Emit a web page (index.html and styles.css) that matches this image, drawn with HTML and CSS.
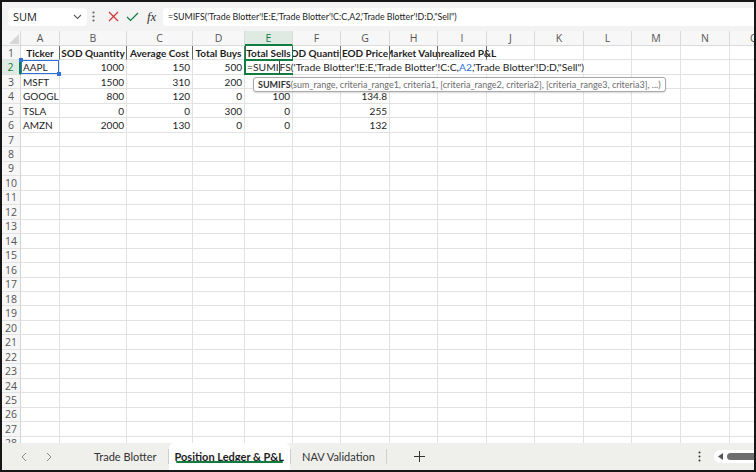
FILE: index.html
```html
<!DOCTYPE html>
<html lang="en">
<head>
    <meta charset="UTF-8">
    <title>Position Ledger &amp; P&amp;L</title>
    <link rel="stylesheet" href="styles.css">
</head>
<body>
<div class="window">
    <!-- Formula Bar -->
    <div class="formula-bar">
        <div class="name-box">
            <span>SUM</span>
            <svg width="9" height="6" viewBox="0 0 9 6"><path d="M1 1l3.5 3.5L8 1" stroke="#5f5f5f" fill="none" stroke-width="1.1"/></svg>
        </div>
        <svg class="bar-dots" width="3" height="11" viewBox="0 0 3 11"><circle cx="1.5" cy="1.5" r="1.1"/><circle cx="1.5" cy="5.5" r="1.1"/><circle cx="1.5" cy="9.5" r="1.1"/></svg>
        <svg class="btn-cancel" width="11" height="11" viewBox="0 0 11 11"><path d="M1 1l9 9M10 1l-9 9" stroke="#d13438" stroke-width="1.2"/></svg>
        <svg class="btn-enter" width="13" height="10" viewBox="0 0 13 10"><path d="M1 5l3.5 3.5L12 1" stroke="#107c41" fill="none" stroke-width="1.2"/></svg>
        <span class="fx">fx</span>
        <div class="formula-input">=SUMIFS('Trade Blotter'!E:E,'Trade Blotter'!C:C,A2,'Trade Blotter'!D:D,"Sell")</div>
    </div>

    <!-- Grid -->
    <div class="sheet" id="sheet">
        <div class="corner"><svg width="10" height="10" viewBox="0 0 10 10"><path d="M10 0V10H0z" fill="#d6d6d6"/></svg></div>
        <div class="ch">A</div><div class="ch">B</div><div class="ch">C</div><div class="ch">D</div>
        <div class="ch active-col">E</div><div class="ch">F</div><div class="ch">G</div><div class="ch">H</div>
        <div class="ch">I</div><div class="ch">J</div><div class="ch">K</div><div class="ch">L</div>
        <div class="ch">M</div><div class="ch">N</div><div class="ch">O</div>

        <div class="rh">1</div>
        <div class="hd"><span>Ticker</span></div>
        <div class="hd"><span>SOD Quantity</span></div>
        <div class="hd"><span>Average Cost</span></div>
        <div class="hd"><span>Total Buys</span></div>
        <div class="hd sel-top"><span>Total Sells</span></div>
        <div class="hd"><span>EOD Quantity</span></div>
        <div class="hd"><span>EOD Price</span></div>
        <div class="hd cover"><span>Market Value</span></div>
        <div class="hd spill"><span>Unrealized P&amp;L</span></div>
        <div></div><div></div><div></div><div></div><div></div><div></div>

        <div class="rh active-row">2</div>
        <div class="ref">AAPL</div>
        <div class="n">1000</div><div class="n">150</div><div class="n">500</div>
        <div class="edit-cell">
            <span class="edit-frame"></span>
            <span class="editor">=SUMI<span class="caret"></span>FS('Trade Blotter'!E:E,'Trade Blotter'!C:C,<span class="ref-text">A2</span>,'Trade Blotter'!D:D,"Sell")</span>
            <span class="tooltip"><b>SUMIFS</b>(sum_range, criteria_range1, criteria1, [criteria_range2, criteria2], [criteria_range3, criteria3], ...)</span>
        </div>
        <div></div><div></div><div></div><div></div><div></div><div></div><div></div><div></div><div></div><div></div>

        <div class="rh">3</div>
        <div>MSFT</div><div class="n">1500</div><div class="n">310</div><div class="n">200</div><div></div>
        <div></div><div></div><div></div><div></div><div></div><div></div><div></div><div></div><div></div><div></div>

        <div class="rh">4</div>
        <div>GOOGL</div><div class="n">800</div><div class="n">120</div><div class="n">0</div><div class="n">100</div>
        <div></div><div class="n">134.8</div><div></div><div></div><div></div><div></div><div></div><div></div><div></div><div></div>

        <div class="rh">5</div>
        <div>TSLA</div><div class="n">0</div><div class="n">0</div><div class="n">300</div><div class="n">0</div>
        <div></div><div class="n">255</div><div></div><div></div><div></div><div></div><div></div><div></div><div></div><div></div>

        <div class="rh">6</div>
        <div>AMZN</div><div class="n">2000</div><div class="n">130</div><div class="n">0</div><div class="n">0</div>
        <div></div><div class="n">132</div><div></div><div></div><div></div><div></div><div></div><div></div><div></div><div></div>
    </div>

    <!-- Sheet Tabs -->
    <div class="tab-bar">
        <div class="tab-nav">
            <svg width="6" height="10" viewBox="0 0 6 10"><path d="M5 1L1 5l4 4" stroke="#8a8a8a" fill="none" stroke-width="1"/></svg>
            <svg width="6" height="10" viewBox="0 0 6 10"><path d="M1 1l4 4-4 4" stroke="#8a8a8a" fill="none" stroke-width="1"/></svg>
        </div>
        <div class="tab first">Trade Blotter</div>
        <span class="tab-sep"></span>
        <div class="tab active">Position Ledger &amp; P&amp;L</div>
        <span class="tab-sep"></span>
        <div class="tab">NAV Validation</div>
        <span class="tab-sep"></span>
        <svg class="add-sheet" width="11" height="11" viewBox="0 0 11 11"><path d="M5.5 0v11M0 5.5h11" stroke="#333" stroke-width="1"/></svg>
        <svg class="tab-dots" width="3" height="11" viewBox="0 0 3 11"><circle cx="1.5" cy="1.5" r="1"/><circle cx="1.5" cy="5.5" r="1"/><circle cx="1.5" cy="9.5" r="1"/></svg>
        <div class="hscroll">
            <svg width="5" height="7" viewBox="0 0 5 7"><path d="M5 0v7L0 3.5z" fill="#555"/></svg>
            <span class="thumb"></span>
        </div>
    </div>
</div>
<script>
    // fill in the empty rows below the data
    var sheet = document.getElementById('sheet');
    for (var r = 7; r <= 28; r++) {
        var row = '<div class="rh">' + r + '</div>';
        for (var c = 0; c < 15; c++) row += '<div></div>';
        sheet.insertAdjacentHTML('beforeend', row);
    }
</script>
</body>
</html>
```

FILE: styles.css
```css
/* Base */
* {
    box-sizing: border-box;
}

body {
    margin: 0;
    background: #161616;
    font-family: "Lato", sans-serif;
}

.window {
    width: 752px;
    height: 468px;
    margin: 2px;
    background: #fff;
    display: flex;
    flex-direction: column;
    overflow: hidden;
}

/* Formula Bar */
.formula-bar {
    height: 29px;
    flex: none;
    background: #f3f3f3;
    display: flex;
    align-items: center;
    padding-left: 6px;
}

.name-box {
    width: 79px;
    height: 18px;
    background: #fff;
    border-radius: 4px;
    display: flex;
    align-items: center;
    justify-content: space-between;
    padding: 0 5px 0 5px;
    font: 11px "Open Sans", sans-serif;
    color: #222;
}

.bar-dots {
    fill: #666;
    margin-left: 5px;
}

.btn-cancel {
    margin-left: 13px;
}

.btn-enter {
    margin-left: 7px;
}

.fx {
    font: italic 13px "Liberation Serif", serif;
    color: #333;
    margin-left: 8px;
    width: 11px;
}

.formula-input {
    flex: 1;
    height: 18px;
    margin-left: 5px;
    background: #fff;
    border-radius: 4px 0 0 4px;
    display: flex;
    align-items: center;
    padding-left: 5px;
    font: 8.85px "Lato", sans-serif;
    color: #222;
    white-space: nowrap;
    overflow: hidden;
}

/* Grid */
.sheet {
    height: 412px;
    flex: none;
    overflow: hidden;
    display: grid;
    grid-template-columns: 19px 39px 67px 66px 52px 48px 48px 49px 48px 49px 48px 49px 48px 49px 49px 49px;
    grid-template-rows: 15px;
    grid-auto-rows: 14.47px;
    font-size: 10px;
    color: #1e1e1e;
}

.sheet > div {
    border-right: 1px solid #e2e2e2;
    border-bottom: 1px solid #e2e2e2;
    display: flex;
    align-items: center;
    white-space: nowrap;
    overflow: hidden;
    padding: 0 2px;
}

.sheet > .corner {
    background: #f7f7f7;
    align-items: flex-end;
    justify-content: flex-end;
    padding: 0 1px 1px 0;
    border-color: #d8d8d8;
}

.sheet > .ch {
    justify-content: center;
    background: #f7f7f7;
    color: #555;
    font: 10.5px "Open Sans", sans-serif;
    border-color: #dadada;
}

.sheet > .active-col {
    background: #dfeae3;
    color: #107c41;
    border-bottom: 2px solid #107c41;
}

.sheet > .rh {
    justify-content: center;
    background: #f7f7f7;
    color: #555;
    font: 10.5px "Open Sans", sans-serif;
    border-right-color: #d4d4d4;
    padding: 0;
}

.sheet > .active-row {
    background: #dfeae3;
    color: #107c41;
    border-right: 2px solid #107c41;
}

.sheet > .n {
    justify-content: flex-end;
}

/* Row 1 headings */
.sheet > .hd {
    justify-content: center;
    font-weight: bold;
    border-right-color: #6a6a6a;
    padding: 0;
}

.sheet > .cover {
    position: relative;
    background: #fff;
}

.sheet > .spill {
    overflow: visible;
}

.sheet > .sel-top {
    border-right-color: #107c41;
    box-shadow: inset 1px 0 0 #107c41;
}

/* Referenced cell A2 */
.sheet > .ref {
    position: relative;
    overflow: visible;
    box-shadow: inset 0 0 0 1px #2f72d8;
}

.ref::before,
.ref::after {
    content: "";
    position: absolute;
    width: 4px;
    height: 4px;
    background: #2f72d8;
}

.ref::before {
    left: -2px;
    top: -2px;
}

.ref::after {
    right: -2px;
    bottom: -2px;
}

/* Cell being edited */
.sheet > .edit-cell {
    position: relative;
    overflow: visible;
    padding: 0;
}

.edit-frame {
    position: absolute;
    left: -1px;
    top: -1px;
    right: -1px;
    bottom: -1px;
    border: 2px solid #107c41;
    z-index: 2;
}

.editor {
    position: absolute;
    left: 1px;
    top: 1px;
    bottom: 1px;
    display: flex;
    align-items: center;
    padding: 0 4px 0 1px;
    background: #fff;
    font-size: 10.3px;
    z-index: 3;
}

.caret {
    display: inline-block;
    width: 0;
    height: 13px;
    border-left: 1px solid #444;
}

.ref-text {
    color: #2f72d8;
}

.tooltip {
    position: absolute;
    left: 8px;
    top: 17px;
    height: 15px;
    display: flex;
    align-items: center;
    padding: 0 4px;
    background: #fff;
    border: 1px solid #a8a8a8;
    border-radius: 3px;
    box-shadow: 0 1px 2px rgba(0, 0, 0, 0.15);
    font-size: 9px;
    color: #6b6b6b;
    white-space: nowrap;
    z-index: 4;
}

.tooltip b {
    color: #333;
}

/* Sheet Tabs */
.tab-bar {
    height: 27px;
    flex: none;
    background: #efefeb;
    display: flex;
    align-items: center;
    font: 11px "Lato", sans-serif;
    color: #333;
}

.tab-nav {
    width: 70px;
    display: flex;
    gap: 19px;
    padding-left: 19px;
}

.tab {
    padding: 0 11px;
    height: 100%;
    display: flex;
    align-items: center;
}

.tab.first {
    margin-left: 11px;
}

.tab.active {
    background: #fff;
    border-radius: 5px 5px 0 0;
    padding: 0 6px;
    font-weight: bold;
    color: #1e1e1e;
    position: relative;
}

.tab.active::after {
    content: "";
    position: absolute;
    left: 7px;
    right: 7px;
    bottom: 7px;
    height: 2px;
    border-radius: 1px;
    background: #107c41;
}

.tab-sep {
    width: 1px;
    height: 15px;
    background: #cfcfcf;
}

.add-sheet {
    margin-left: 27px;
}

.tab-dots {
    fill: #333;
    margin-left: auto;
}

.hscroll {
    width: 40px;
    height: 13px;
    margin-left: 13px;
    background: #fff;
    border-radius: 7px 0 0 7px;
    display: flex;
    align-items: center;
    padding-left: 4px;
    gap: 4px;
}

.thumb {
    flex: 1;
    height: 7px;
    border-radius: 4px 0 0 4px;
    background: #6e6e6e;
}
```
